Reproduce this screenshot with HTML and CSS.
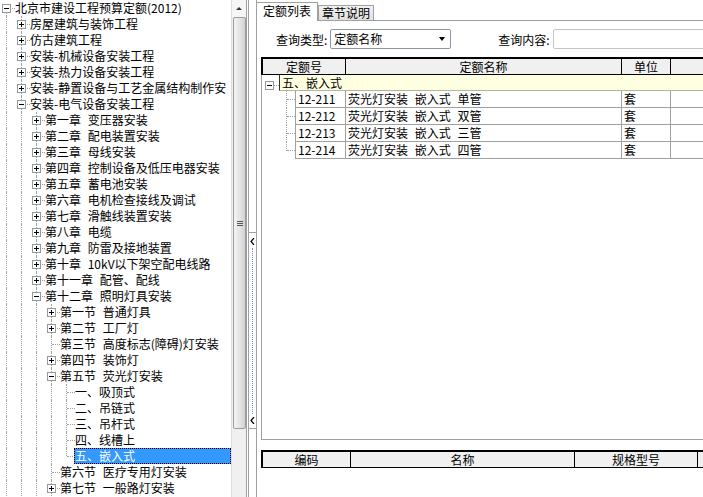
FILE: index.html
```html
<!DOCTYPE html>
<html lang="zh">
<head>
  <meta charset="UTF-8">
  <title>定额列表</title>
  <link rel="stylesheet" href="styles.css">
</head>
<body>
  <!-- 左侧：定额章节树 -->
  <div class="left">
    <div class="tree">
      <div class="row"><span class="t root"><i class="box minus"></i></span><span class="lbl">北京市建设工程预算定额(2012)</span></div>
      <div class="row"><span class="g"></span><span class="t"><i class="box plus"></i></span><span class="lbl">房屋建筑与装饰工程</span></div>
      <div class="row"><span class="g"></span><span class="t"><i class="box plus"></i></span><span class="lbl">仿古建筑工程</span></div>
      <div class="row"><span class="g"></span><span class="t"><i class="box plus"></i></span><span class="lbl">安装-机械设备安装工程</span></div>
      <div class="row"><span class="g"></span><span class="t"><i class="box plus"></i></span><span class="lbl">安装-热力设备安装工程</span></div>
      <div class="row"><span class="g"></span><span class="t"><i class="box plus"></i></span><span class="lbl">安装-静置设备与工艺金属结构制作安</span></div>
      <div class="row"><span class="g"></span><span class="t"><i class="box minus"></i></span><span class="lbl">安装-电气设备安装工程</span></div>
      <div class="row"><span class="g"></span><span class="g"></span><span class="t"><i class="box plus"></i></span><span class="lbl">第一章 变压器安装</span></div>
      <div class="row"><span class="g"></span><span class="g"></span><span class="t"><i class="box plus"></i></span><span class="lbl">第二章 配电装置安装</span></div>
      <div class="row"><span class="g"></span><span class="g"></span><span class="t"><i class="box plus"></i></span><span class="lbl">第三章 母线安装</span></div>
      <div class="row"><span class="g"></span><span class="g"></span><span class="t"><i class="box plus"></i></span><span class="lbl">第四章 控制设备及低压电器安装</span></div>
      <div class="row"><span class="g"></span><span class="g"></span><span class="t"><i class="box plus"></i></span><span class="lbl">第五章 蓄电池安装</span></div>
      <div class="row"><span class="g"></span><span class="g"></span><span class="t"><i class="box plus"></i></span><span class="lbl">第六章 电机检查接线及调试</span></div>
      <div class="row"><span class="g"></span><span class="g"></span><span class="t"><i class="box plus"></i></span><span class="lbl">第七章 滑触线装置安装</span></div>
      <div class="row"><span class="g"></span><span class="g"></span><span class="t"><i class="box plus"></i></span><span class="lbl">第八章 电缆</span></div>
      <div class="row"><span class="g"></span><span class="g"></span><span class="t"><i class="box plus"></i></span><span class="lbl">第九章 防雷及接地装置</span></div>
      <div class="row"><span class="g"></span><span class="g"></span><span class="t"><i class="box plus"></i></span><span class="lbl">第十章 10kV以下架空配电线路</span></div>
      <div class="row"><span class="g"></span><span class="g"></span><span class="t"><i class="box plus"></i></span><span class="lbl">第十一章 配管、配线</span></div>
      <div class="row"><span class="g"></span><span class="g"></span><span class="t"><i class="box minus"></i></span><span class="lbl">第十二章 照明灯具安装</span></div>
      <div class="row"><span class="g"></span><span class="g"></span><span class="g"></span><span class="t"><i class="box plus"></i></span><span class="lbl">第一节 普通灯具</span></div>
      <div class="row"><span class="g"></span><span class="g"></span><span class="g"></span><span class="t"><i class="box plus"></i></span><span class="lbl">第二节 工厂灯</span></div>
      <div class="row"><span class="g"></span><span class="g"></span><span class="g"></span><span class="t"></span><span class="lbl">第三节 高度标志(障碍)灯安装</span></div>
      <div class="row"><span class="g"></span><span class="g"></span><span class="g"></span><span class="t"><i class="box plus"></i></span><span class="lbl">第四节 装饰灯</span></div>
      <div class="row"><span class="g"></span><span class="g"></span><span class="g"></span><span class="t"><i class="box minus"></i></span><span class="lbl">第五节 荧光灯安装</span></div>
      <div class="row"><span class="g"></span><span class="g"></span><span class="g"></span><span class="g"></span><span class="t"></span><span class="lbl">一、吸顶式</span></div>
      <div class="row"><span class="g"></span><span class="g"></span><span class="g"></span><span class="g"></span><span class="t"></span><span class="lbl">二、吊链式</span></div>
      <div class="row"><span class="g"></span><span class="g"></span><span class="g"></span><span class="g"></span><span class="t"></span><span class="lbl">三、吊杆式</span></div>
      <div class="row"><span class="g"></span><span class="g"></span><span class="g"></span><span class="g"></span><span class="t"></span><span class="lbl">四、线槽上</span></div>
      <div class="row"><span class="g"></span><span class="g"></span><span class="g"></span><span class="g"></span><span class="t last"></span><span class="lbl sel">五、嵌入式</span></div>
      <div class="row"><span class="g"></span><span class="g"></span><span class="g"></span><span class="t"></span><span class="lbl">第六节 医疗专用灯安装</span></div>
      <div class="row"><span class="g"></span><span class="g"></span><span class="g"></span><span class="t"><i class="box plus"></i></span><span class="lbl">第七节 一般路灯安装</span></div>
    </div>
    <!-- 竖向滚动条 -->
    <div class="vscroll">
      <div class="sbtn"><span class="up"></span></div>
      <div class="thumb"><span class="grip"></span></div>
    </div>
  </div>

  <!-- 分隔条 -->
  <div class="split">
    <div class="handle">
      <svg width="5" height="7" viewBox="0 0 5 7"><polyline points="4,0 1,3.5 4,7" fill="none" stroke="#000" stroke-width="1.2"/></svg>
      <div class="dots"></div>
      <svg width="5" height="7" viewBox="0 0 5 7"><polyline points="4,0 1,3.5 4,7" fill="none" stroke="#000" stroke-width="1.2"/></svg>
    </div>
  </div>

  <!-- 右侧：定额列表 -->
  <div class="right">
    <div class="tabs">
      <div class="tab active">定额列表</div>
      <div class="tab">章节说明</div>
    </div>
    <div class="page">
      <div class="query">
        <span class="qlabel">查询类型:</span>
        <div class="select"><span>定额名称</span><span class="arrow"></span></div>
        <span class="qlabel second">查询内容:</span>
        <div class="input"></div>
      </div>

      <div class="grid main">
        <div class="ghead">
          <div class="hc c-code">定额号</div>
          <div class="hc c-name">定额名称</div>
          <div class="hc c-unit">单位</div>
          <div class="hc c-rest"></div>
        </div>
        <div class="gbody">
          <div class="group">
            <div class="gtree"><i class="box minus"></i></div>
            <div class="gcell">五、嵌入式</div>
          </div>
          <div class="items">
            <div class="drow">
              <div class="dtree"></div>
              <div class="dc c-code">12-211</div>
              <div class="dc c-name">荧光灯安装 嵌入式 单管</div>
              <div class="dc c-unit">套</div>
              <div class="dc c-rest"></div>
            </div>
            <div class="drow">
              <div class="dtree"></div>
              <div class="dc c-code">12-212</div>
              <div class="dc c-name">荧光灯安装 嵌入式 双管</div>
              <div class="dc c-unit">套</div>
              <div class="dc c-rest"></div>
            </div>
            <div class="drow">
              <div class="dtree"></div>
              <div class="dc c-code">12-213</div>
              <div class="dc c-name">荧光灯安装 嵌入式 三管</div>
              <div class="dc c-unit">套</div>
              <div class="dc c-rest"></div>
            </div>
            <div class="drow">
              <div class="dtree last"></div>
              <div class="dc c-code">12-214</div>
              <div class="dc c-name">荧光灯安装 嵌入式 四管</div>
              <div class="dc c-unit">套</div>
              <div class="dc c-rest"></div>
            </div>
          </div>
        </div>
      </div>

      <div class="grid sub">
        <div class="ghead">
          <div class="hc c-bm">编码</div>
          <div class="hc c-mc">名称</div>
          <div class="hc c-gg">规格型号</div>
          <div class="hc c-rest"></div>
        </div>
      </div>
    </div>
  </div>
</body>
</html>
```

FILE: styles.css
```css
body {
  margin: 0;
  width: 703px;
  height: 497px;
  overflow: hidden;
  display: flex;
  background: #fff;
  font-family: "Noto Sans CJK SC", "DejaVu Sans", sans-serif;
  font-size: 12px;
  color: #000;
}
/* 左侧树 */
.left {
  display: flex;
  width: 247px;
  flex: none;
}
.tree {
  width: 231px;
  overflow: hidden;
}
.row {
  display: flex;
  height: 16px;
  line-height: 16px;
  white-space: nowrap;
}
.g, .t {
  flex: none;
  width: 15px;
  height: 16px;
  position: relative;
}
.g::before, .t::before {
  content: "";
  position: absolute;
  left: 6px;
  top: 0;
  bottom: 0;
  border-left: 1px dotted #a0a0a0;
}
.t.root::before { top: 8px; }
.t.last::before { bottom: 8px; }
.t::after {
  content: "";
  position: absolute;
  left: 7px;
  right: 0;
  top: 8px;
  border-top: 1px dotted #a0a0a0;
}
/* 展开/折叠方框 */
.box {
  position: absolute;
  left: 2px;
  top: 4px;
  width: 7px;
  height: 7px;
  border: 1px solid #919b9c;
  background: #fff;
  z-index: 1;
}
.box::before {
  content: "";
  position: absolute;
  left: 1px;
  top: 3px;
  width: 5px;
  height: 1px;
  background: #000;
}
.box.plus::after {
  content: "";
  position: absolute;
  left: 3px;
  top: 1px;
  width: 1px;
  height: 5px;
  background: #000;
}
.lbl {
  padding-right: 2px;
  word-spacing: 4px;
}
.lbl.sel {
  flex: 1;
  margin-left: -1px;
  padding-left: 1px;
  background: #3399ff;
  color: #fff;
  outline: 1px dotted #000;
  outline-offset: -1px;
}
/* 滚动条 */
.vscroll {
  width: 14px;
  border-left: 1px solid #dcdcdc;
  border-right: 1px solid #a0a0a0;
  background: #f0f0f0;
  display: flex;
  flex-direction: column;
}
.sbtn {
  height: 17px;
  background: #f6f6f6;
  display: flex;
  align-items: center;
  justify-content: center;
}
.up {
  width: 0;
  height: 0;
  border-left: 3px solid transparent;
  border-right: 3px solid transparent;
  border-bottom: 3px solid #333;
}
.thumb {
  height: 410px;
  margin: 0 0 0 1px;
  border: 1px solid #9c9c9c;
  border-radius: 2px;
  background: linear-gradient(to right, #f4f4f4, #e2e2e2 60%, #d2d2d2);
  display: flex;
  align-items: center;
  justify-content: center;
}
.grip {
  width: 6px;
  height: 5px;
  background: repeating-linear-gradient(to bottom, #555 0 1px, transparent 1px 2px);
}
/* 分隔条 */
.split {
  flex: none;
  width: 7px;
  margin-left: 1px;
  border-left: 1px solid #a0a0a0;
  border-right: 1px solid #a0a0a0;
}
.handle {
  margin-top: 232px;
  height: 197px;
  border-top: 1px solid #a0a0a0;
  border-bottom: 1px solid #a0a0a0;
  display: flex;
  flex-direction: column;
  align-items: center;
  padding: 5px 0 4px;
  box-sizing: border-box;
}
.dots {
  flex: 1;
  margin: 3px 0;
  border-left: 1px dotted #6a8cc8;
}
/* 右侧 */
.right {
  flex: 1;
  min-width: 0;
  overflow: hidden;
  display: flex;
  flex-direction: column;
}
.tabs {
  height: 20px;
  display: flex;
  align-items: flex-end;
  border-bottom: 1px solid #a0a0a0;
}
.tab {
  flex: none;
  height: 14px;
  line-height: 14px;
  padding: 0 3px;
  border: 1px solid #a0a0a0;
  border-bottom: none;
  background: linear-gradient(#f2f2f2, #e0e0e0);
}
.tab.active {
  height: 18px;
  line-height: 16px;
  padding: 0 6px;
  border-left: none;
  margin-bottom: -1px;
  background: #fff;
}
.page {
  flex: 1;
  padding-left: 4px;
  display: flex;
  flex-direction: column;
}
.query {
  display: flex;
  align-items: center;
  height: 20px;
  margin: 8px 0 0 15px;
  white-space: nowrap;
}
.qlabel {
  width: 53px;
  margin-right: 3px;
}
.qlabel.second {
  margin-left: 47px;
}
.select {
  flex: none;
  width: 116px;
  height: 18px;
  line-height: 18px;
  border: 1px solid #8c97a5;
  border-radius: 2px;
  padding-left: 3px;
  display: flex;
  justify-content: space-between;
  align-items: center;
}
.arrow {
  width: 0;
  height: 0;
  margin-right: 5px;
  border-left: 3px solid transparent;
  border-right: 3px solid transparent;
  border-top: 4px solid #000;
}
.input {
  flex: none;
  width: 200px;
  height: 18px;
  border: 1px solid #c4c4c4;
  border-radius: 2px;
}
/* 表格 */
.grid {
  display: flex;
  flex-direction: column;
}
.grid.main {
  margin-top: 8px;
  height: 383px;
}
.grid.sub {
  margin-top: 10px;
}
.ghead {
  display: flex;
  height: 15px;
  line-height: 15px;
  border-top: 2px solid #000;
  border-left: 2px solid #000;
  border-bottom: 1px solid #000;
  background: #f0f0f0;
  white-space: nowrap;
}
.hc {
  flex: none;
  text-align: center;
  border-right: 1px solid #000;
}
.c-code { width: 82px; }
.c-name { width: 275px; }
.c-unit { width: 48px; }
.c-bm { width: 87px; }
.c-mc { width: 223px; }
.c-gg { width: 122px; }
.hc.c-rest { flex: 1; border-right: none; }
.gbody {
  flex: 1;
  border-left: 1px solid #a0a0a0;
  border-bottom: 1px solid #a0a0a0;
}
.group {
  display: flex;
  height: 16px;
  line-height: 16px;
}
.gtree {
  width: 17px;
  position: relative;
}
.gtree .box {
  left: 3px;
  top: 6px;
}
.gtree::after {
  content: "";
  position: absolute;
  left: 11px;
  right: 0;
  top: 10px;
  border-top: 1px dotted #a0a0a0;
}
.gcell {
  flex: 1;
  padding-left: 2px;
  background: #ffffe1;
  border-left: 1px solid #333;
  border-bottom: 1px solid #b4b49c;
}
.drow {
  display: flex;
  height: 17px;
  line-height: 16px;
  white-space: nowrap;
}
.dtree {
  width: 33px;
  position: relative;
}
.dtree::before {
  content: "";
  position: absolute;
  left: 24px;
  top: 0;
  bottom: 0;
  border-left: 1px dotted #a0a0a0;
}
.dtree.last::before { bottom: 8px; }
.dtree::after {
  content: "";
  position: absolute;
  left: 25px;
  right: 0;
  top: 8px;
  border-top: 1px dotted #a0a0a0;
}
.dc {
  flex: none;
  border-right: 1px solid #a0a0a0;
  border-bottom: 1px solid #a0a0a0;
  padding-left: 2px;
  word-spacing: 4px;
}
.dc.c-code {
  border-left: 1px solid #a0a0a0;
  width: 47px;
}
.dc.c-name { width: 273px; }
.dc.c-unit { width: 46px; }
.dc.c-rest { flex: 1; border-right: none; }
```
